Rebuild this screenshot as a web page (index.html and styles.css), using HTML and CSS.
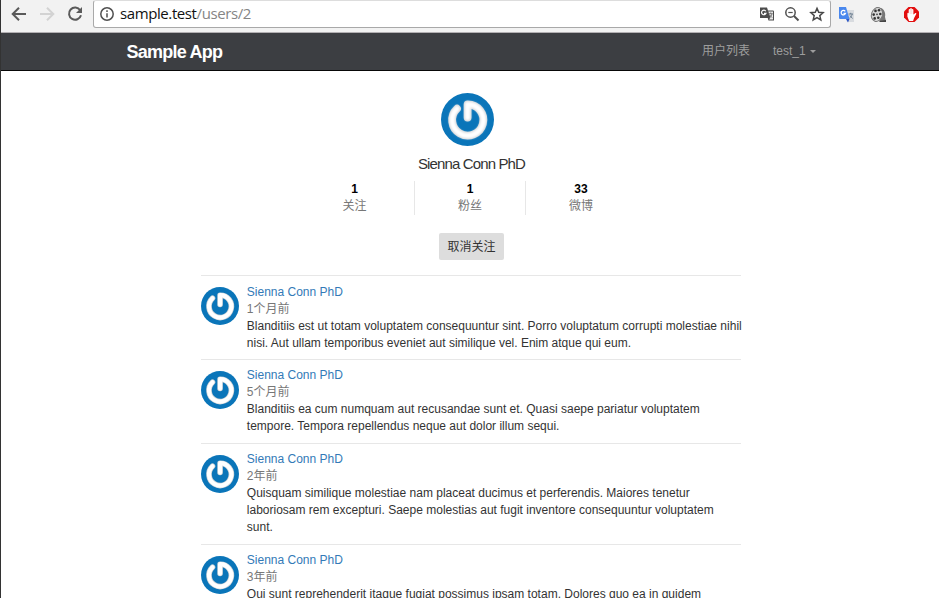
FILE: index.html
```html
<!DOCTYPE html>
<html lang="zh-CN">
<head>
<meta charset="utf-8">
<title>Sienna Conn PhD</title>
<link rel="stylesheet" href="styles.css">
</head>
<body>
<svg class="defs" width="0" height="0" aria-hidden="true">
  <defs>
    <filter id="soft" x="-20%" y="-20%" width="140%" height="140%">
      <feGaussianBlur stdDeviation=".9"/>
    </filter>
    <symbol id="avatar" viewBox="0 0 53 53">
      <circle cx="26.5" cy="26.5" r="26.5" fill="#0a75b9"/>
      <g fill="none" stroke-linecap="round" stroke-linejoin="round">
        <path d="M16 15.700A15.600 15.600 0 1 0 26.600 11.400V24.500" stroke="#cfd3d6" stroke-width="7.800"/>
        <path d="M16 15.700A15.600 15.600 0 1 0 26.600 11.400V24.500" stroke="#fff" stroke-width="5.800" filter="url(#soft)"/>
      </g>
    </symbol>
  </defs>
</svg>
<header class="chrome">
  <svg class="nav-icon back" viewBox="0 0 16 16"><path d="M15 8H2M8 1.7 1.7 8 8 14.3"/></svg>
  <svg class="nav-icon forward" viewBox="0 0 16 16"><path d="M1 8h13M8 1.7 14.3 8 8 14.3"/></svg>
  <svg class="nav-icon reload" viewBox="0 0 16 16"><path d="M13.2 4.2A6.1 6.1 0 1 0 14 9.3"/><path class="solid" d="M15 1v6H9z"/></svg>
  <div class="address">
    <svg class="info" viewBox="0 0 14 14"><circle cx="7" cy="7" r="6.2"/><path d="M7 6.2v4.3M7 3.3v1.7"/></svg>
    <span class="url">sample.test<span>/users/2</span></span>
    <svg class="act" viewBox="0 0 16 16"><path d="M1 1.500h7l1 3h5a1 1 0 0 1 1 1v9H9.500L8.700 12H1z" fill="#4c4c4c"/><path d="M9.300 5.500h4.700v8H10l1.500-2z" fill="#e8e8e8"/><path d="M9.700 7.700h4M11.700 6.500v1.200M13 7.700c-.5 2-1.300 2.700-2.300 3.700M10.700 9l2.500 2.700" fill="none" stroke="#777"/><path d="M6.800 5.200A2.300 2.300 0 1 0 7 7.300H5" fill="none" stroke="#fff" stroke-width="1.200"/></svg>
    <svg class="act" viewBox="0 0 16 16"><g fill="none" stroke="#505050" stroke-width="1.500"><circle cx="6.500" cy="6.500" r="4.700"/><path d="m10 10 4.500 4.500" stroke-width="2"/><path d="M4.300 6.500h4.400" stroke-width="1.200"/></g></svg>
    <svg class="act" viewBox="0 0 16 16"><path d="m8 2.300 1.700 4 4.400.4-3.300 2.900 1 4.300L8 11.600l-3.800 2.300 1-4.300-3.300-2.900 4.400-.4z" fill="none" stroke="#484848" stroke-width="1.500"/></svg>
  </div>
  <svg class="ext" viewBox="0 0 17 17"><path d="M7 4h9v12H9z" fill="#d8dbdf"/><path d="M1 1h7l3.500 12H2a1 1 0 0 1-1-1z" fill="#4a88ee"/><path d="M8 13h3.500L10 16.500z" fill="#2c56c8"/><path d="M7.200 5.400A2.200 2.200 0 1 0 7.500 7.300H5.500" fill="none" stroke="#fff" stroke-width="1.300"/><path d="M10.500 8h4.500M12.700 6.800V8M14.200 8c-.4 2-1.300 3-2.600 4M12 9.500l2.500 3" fill="none" stroke="#6c7e90"/></svg>
  <svg class="ext" viewBox="0 0 17 17"><path d="M6 1.500 11 2c3 1 5 5 4 9l1 4-6 1z" fill="#777"/><path d="m9 15 7-1v2h-6z" fill="#444"/><ellipse cx="7" cy="8.500" rx="5.500" ry="7" fill="#d8d8d8" stroke="#777" transform="rotate(18 7 8.500)"/><g fill="#333"><circle cx="5.500" cy="4.900" r="1.300"/><circle cx="9" cy="4.300" r="1.300"/><circle cx="3.700" cy="8.600" r="1.300"/><circle cx="10.300" cy="8" r="1.300"/><circle cx="4.700" cy="12.400" r="1.300"/><circle cx="8.300" cy="11.800" r="1.300"/><circle cx="7" cy="8.400" r=".8"/></g></svg>
  <svg class="ext" viewBox="0 0 17 17"><path d="M5.500 1h6L16 5.500v6L11.500 16h-6L1 11.500v-6z" fill="#e20e0e"/><path d="M5.500 15 3.800 10.500V7.500c0-1 1.200-1 1.300 0V4c0-1.200 1.400-1.200 1.500 0V3c.1-1.200 1.500-1.200 1.600 0v1c.1-1.200 1.500-1.200 1.600 0v4.500l1.700-1.300c.8-.5 1.700.3 1 1.100L10.500 12 9.500 15z" fill="#fff" transform="translate(.6)"/><path d="M7.200 4v4M8.800 4v4" stroke="#e9a0a0" stroke-width=".4"/></svg>
</header>
<nav class="navbar">
  <a class="brand">Sample App</a>
  <a class="users">用户列表</a>
  <a class="account">test_1<i class="caret"></i></a>
</nav>
<main class="page">
  <section class="profile">
    <svg class="avatar large"><use href="#avatar"/></svg>
    <h1>Sienna Conn PhD</h1>
    <div class="stats">
      <a><strong>1</strong>关注</a>
      <a><strong>1</strong>粉丝</a>
      <a><strong>33</strong>微博</a>
    </div>
    <button class="unfollow">取消关注</button>
  </section>
  <ol class="posts">
    <li><svg class="avatar"><use href="#avatar"/></svg>
      <div class="post"><a>Sienna Conn PhD</a><time>1个月前</time><p>Blanditiis est ut totam voluptatem consequuntur sint. Porro voluptatum corrupti molestiae nihil<br>nisi. Aut ullam temporibus eveniet aut similique vel. Enim atque qui eum.</p></div></li>
    <li><svg class="avatar"><use href="#avatar"/></svg>
      <div class="post"><a>Sienna Conn PhD</a><time>5个月前</time><p>Blanditiis ea cum numquam aut recusandae sunt et. Quasi saepe pariatur voluptatem<br>tempore. Tempora repellendus neque aut dolor illum sequi.</p></div></li>
    <li><svg class="avatar"><use href="#avatar"/></svg>
      <div class="post"><a>Sienna Conn PhD</a><time>2年前</time><p>Quisquam similique molestiae nam placeat ducimus et perferendis. Maiores tenetur<br>laboriosam rem excepturi. Saepe molestias aut fugit inventore consequuntur voluptatem<br>sunt.</p></div></li>
    <li><svg class="avatar"><use href="#avatar"/></svg>
      <div class="post"><a>Sienna Conn PhD</a><time>3年前</time><p>Qui sunt reprehenderit itaque fugiat possimus ipsam totam. Dolores quo ea in quidem</p></div></li>
  </ol>
</main>
</body>
</html>
```
FILE: styles.css
```css
* { box-sizing: border-box; }
html, body { height: 100%; margin: 0; overflow: hidden; }
body {
  background: #fff;
  border-left: 1px solid #333;
  color: #333;
  font: 12px/17px "Liberation Sans", "Noto Sans CJK SC", sans-serif;
}
.defs { display: block; height: 0; }
svg { display: block; flex: none; }

.chrome {
  display: flex;
  align-items: flex-start;
  height: 33px;
  background: #f2f2f2;
  border-bottom: 1px solid #b3b0b3;
}
.nav-icon { width: 16px; height: 16px; margin-top: 6px; fill: none; stroke: #5a5a5a; stroke-width: 2; }
.back { margin-left: 10px; }
.forward { margin-left: 12px; stroke: #d3d3d3; }
.reload { margin-left: 12px; }
.reload .solid { fill: #5a5a5a; stroke: none; }
.address {
  display: flex;
  width: 738px;
  height: 28px;
  margin-left: 10px;
  padding-left: 6px;
  background: #fff;
  border: 1px solid #a9a9a9;
  border-top-color: #ddd;
  border-radius: 3px;
}
.info { width: 14px; height: 14px; margin-top: 6px; fill: none; stroke: #505050; stroke-width: 1.5; }
.url { flex: 1; margin-left: 6px; color: #111; font: 15px/25px "Open Sans", sans-serif; letter-spacing: -.4px; }
.url span { color: #858585; }
.act { width: 16px; height: 16px; margin: 5px 9px 0 0; }
.act:last-child { margin-right: 5px; }
.ext { width: 17px; height: 17px; margin: 6px 0 0 7px; }
.ext + .ext { margin-left: 15px; }
.ext:last-child { margin-left: 16px; }

.navbar {
  display: flex;
  height: 38px;
  padding-left: 125.500px;
  background: #3c3e42;
  border-bottom: 1px solid #080808;
  color: #9d9d9d;
  line-height: 36px;
}
.brand { width: 575.500px; color: #fff; font-size: 18px; font-weight: bold; letter-spacing: -.75px; line-height: 38px; }
.users { width: 71px; }
.caret {
  display: inline-block;
  margin-left: 4px;
  border: 3px solid transparent;
  border-top-color: currentColor;
  border-bottom: 0;
  vertical-align: 2px;
}

.page { width: 540px; margin-left: 200px; }
.profile { display: flex; flex-direction: column; align-items: center; height: 204px; padding-top: 22px; }
.avatar { width: 38px; height: 38px; }
.avatar.large { width: 53px; height: 53px; margin-right: 7px; }
.profile h1 { margin: 8px 0 0 1px; font-size: 15px; font-weight: normal; letter-spacing: -.87px; line-height: 19px; }
.stats { display: flex; height: 34px; margin: 8px 12px 18px 0; }
.stats a { width: 111px; color: #777; text-align: center; }
.stats a:first-child { width: 120px; padding-left: 1px; }
.stats a + a { border-left: 1px solid #e7e7e7; }
.stats strong { display: block; color: #000; line-height: 17px; }
.unfollow {
  width: 65px;
  height: 27px;
  padding: 1px 0 0;
  margin-left: 1px;
  background: #ddd;
  border: 0;
  border-radius: 2px;
  color: #333;
  font: inherit;
}
.posts { margin: 0; padding: 0; list-style: none; }
.posts li { display: flex; height: 84px; border-top: 1px solid #e7e7e7; }
.posts li:nth-child(3) { height: 101px; }
.posts .avatar { margin-top: 11px; }
.post { padding: 7px 0 0 7.8px; white-space: nowrap; }
.posts li:first-child .post { padding-top: 8px; }
.post a, .post time { display: block; }
.post a { color: #337ab7; }
.post time { color: #777; }
.post p { margin: 0; }
```
